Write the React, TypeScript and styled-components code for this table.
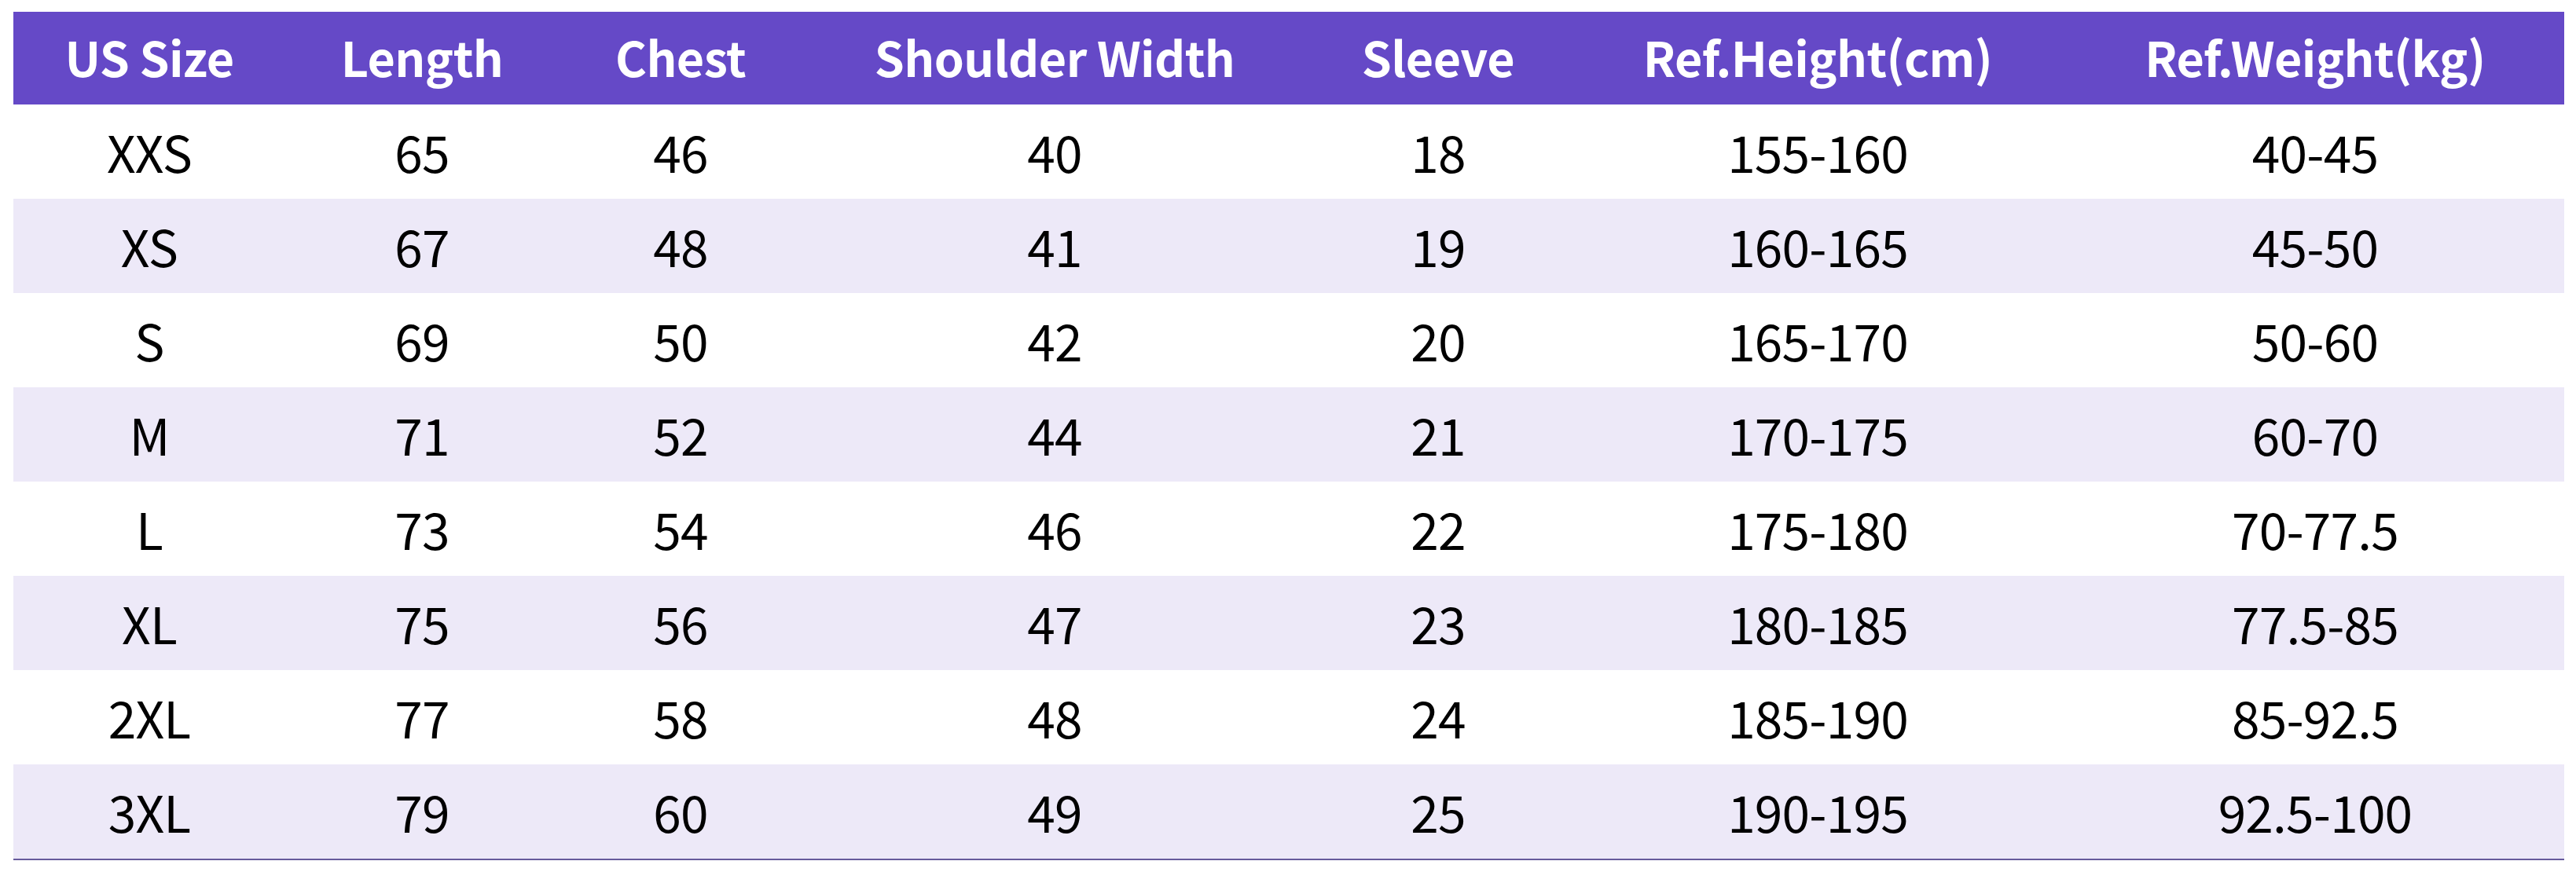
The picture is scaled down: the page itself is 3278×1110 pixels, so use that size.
import React from "react";
import styled, { createGlobalStyle } from "styled-components";

const GlobalStyle = createGlobalStyle`
  html, body {
    margin: 0;
    padding: 0;
    background: #ffffff;
  }
  body {
    font-family: "Noto Sans CJK SC", "Noto Sans", sans-serif;
  }
`;

const COLS = "346px 348px 310px 642px 334px 632px 634px";

const Page = styled.div`
  width: 3278px;
  height: 1110px;
  box-sizing: border-box;
  padding: 15px 15px 0 17px;
  background: #ffffff;
`;

const Table = styled.div`
  width: 3246px;
  display: flex;
  flex-direction: column;
  border-bottom: 2px solid #665a9c;
`;

const HeaderRow = styled.div`
  display: grid;
  grid-template-columns: ${COLS};
  height: 118px;
  background: #6549c7;
`;

const HeaderCell = styled.div`
  display: flex;
  align-items: center;
  justify-content: center;
  box-sizing: border-box;
  padding-bottom: 6px;
  color: #ffffff;
  font-family: "Noto Sans CJK SC", "Noto Sans", sans-serif;
  font-weight: 700;
  font-size: 61px;
  letter-spacing: -0.6px;
  white-space: nowrap;
`;

const Row = styled.div<{ $striped: boolean }>`
  display: grid;
  grid-template-columns: ${COLS};
  height: 120px;
  background: ${(p) => (p.$striped ? "#ede9f8" : "#ffffff")};
`;

const Cell = styled.div`
  display: flex;
  align-items: center;
  justify-content: center;
  box-sizing: border-box;
  padding-bottom: 3px;
  color: #000000;
  font-family: "Noto Sans CJK SC", "Noto Sans", sans-serif;
  font-weight: 400;
  font-size: 64px;
  letter-spacing: -0.8px;
  white-space: nowrap;
`;

const headers = [
  "US Size",
  "Length",
  "Chest",
  "Shoulder Width",
  "Sleeve",
  "Ref.Height(cm)",
  "Ref.Weight(kg)",
];

const rows: string[][] = [
  ["XXS", "65", "46", "40", "18", "155-160", "40-45"],
  ["XS", "67", "48", "41", "19", "160-165", "45-50"],
  ["S", "69", "50", "42", "20", "165-170", "50-60"],
  ["M", "71", "52", "44", "21", "170-175", "60-70"],
  ["L", "73", "54", "46", "22", "175-180", "70-77.5"],
  ["XL", "75", "56", "47", "23", "180-185", "77.5-85"],
  ["2XL", "77", "58", "48", "24", "185-190", "85-92.5"],
  ["3XL", "79", "60", "49", "25", "190-195", "92.5-100"],
];

export default function App() {
  return (
    <>
      <GlobalStyle />
      <Page>
        <Table>
          <HeaderRow>
            {headers.map((h) => (
              <HeaderCell key={h}>{h}</HeaderCell>
            ))}
          </HeaderRow>
          {rows.map((r, i) => (
            <Row key={r[0]} $striped={i % 2 === 1}>
              {r.map((c, j) => (
                <Cell key={j}>{c}</Cell>
              ))}
            </Row>
          ))}
        </Table>
      </Page>
    </>
  );
}
